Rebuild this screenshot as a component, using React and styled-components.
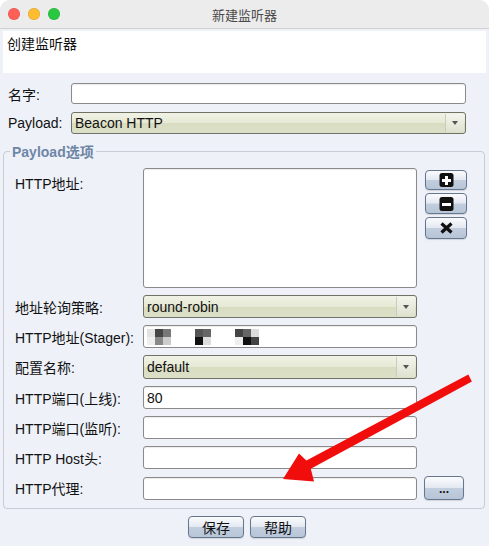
import React from 'react';
import styled, { createGlobalStyle } from 'styled-components';

const GlobalStyle = createGlobalStyle`
  html, body {
    margin: 0;
    padding: 0;
    background: #ffffff;
  }
  body {
    font-family: "Liberation Sans", "Noto Sans CJK SC", sans-serif;
    font-size: 13px;
    color: #111;
  }
`;

const Window = styled.div`
  position: relative;
  width: 489px;
  height: 546px;
  background: #eef1f8;
  border-radius: 10px 10px 0 0;
  overflow: hidden;
  display: flex;
  flex-direction: column;
`;

const TitleBar = styled.div`
  height: 28px;
  flex: none;
  background: #ececec;
  border-bottom: 1px solid #d0d0d0;
  display: flex;
  align-items: center;
  position: relative;
`;

const Lights = styled.div`
  display: flex;
  gap: 8px;
  padding-left: 8px;
`;

const Light = styled.span`
  width: 12px;
  height: 12px;
  border-radius: 50%;
  background: ${(p) => p.color};
  box-shadow: inset 0 0 0 0.5px rgba(0, 0, 0, 0.15);
`;

const Title = styled.div`
  position: absolute;
  left: 0;
  right: 0;
  text-align: center;
  font-size: 13px;
  color: #4a4a4a;
  pointer-events: none;
`;

const Banner = styled.div`
  margin: 2px 3px 0;
  height: 42px;
  background: #ffffff;
  padding: 4px 4px 0;
  box-sizing: border-box;
  font-size: 14px;
  line-height: 18px;
`;

const TopForm = styled.div`
  display: grid;
  grid-template-columns: 63px 395px;
  row-gap: 8px;
  padding: 10px 0 0 8px;
  align-items: center;
`;

const Label = styled.div`
  font-size: 14px;
  white-space: nowrap;
`;

const TextInput = styled.div`
  height: ${(p) => p.h || 22}px;
  box-sizing: border-box;
  background: #ffffff;
  border: 1px solid #8a8a8a;
  border-radius: 3px;
  padding: 0 3px;
  display: flex;
  align-items: ${(p) => (p.top ? 'flex-start' : 'center')};
  font-size: 14px;
  box-shadow: inset 0 1px 1px rgba(0, 0, 0, 0.08);
`;

const Combo = styled.div`
  height: ${(p) => p.h || 22}px;
  box-sizing: border-box;
  border: 1px solid #6f7264;
  border-radius: 3px;
  background: linear-gradient(#f1f2e6 0%, #e6e9d4 50%, #d8dcc0 51%, #dce0c8 100%);
  display: flex;
  align-items: center;
  padding-left: 3px;
  font-size: 14px;
  position: relative;
`;

const ComboArrow = styled.div`
  position: absolute;
  right: 1px;
  top: 1px;
  bottom: 1px;
  width: 18px;
  border-left: 1px solid #c9ccbb;
  border-radius: 0 2px 2px 0;
  background: linear-gradient(#f3f4ec, #dfe2d0);
  display: flex;
  align-items: center;
  justify-content: center;
  &::after {
    content: '';
    border-left: 3.5px solid transparent;
    border-right: 3.5px solid transparent;
    border-top: 4px solid #555;
  }
`;

const Fieldset = styled.fieldset`
  margin: 7px 4px 0 3px;
  padding: 7px 0 8px 11px;
  border: 1px solid #c8ccd6;
  border-radius: 4px;
  min-width: 0;
`;

const Legend = styled.legend`
  font-weight: bold;
  color: #6e86a6;
  font-size: 14px;
  padding: 0 2px;
  margin-left: -5px;
`;

const Grid = styled.div`
  display: grid;
  grid-template-columns: 128px 274px 50px;
  row-gap: 7px;
  align-items: center;
`;

const TopLabel = styled(Label)`
  align-self: start;
  padding-top: 5px;
`;

const SideButtons = styled.div`
  align-self: start;
  padding: 2px 0 0 8px;
  display: flex;
  flex-direction: column;
  gap: 3px;
`;

const GelButton = styled.button`
  width: ${(p) => p.w || 42}px;
  height: ${(p) => p.h || 21}px;
  box-sizing: border-box;
  padding: 0;
  border: 1px solid #66768d;
  border-radius: 4px;
  background: linear-gradient(#fafbfd 0%, #e4e9f1 48%, #c2cede 52%, #b7c5d8 100%);
  display: flex;
  align-items: center;
  justify-content: center;
  font-family: "Liberation Sans", "Noto Sans CJK SC", sans-serif;
  font-size: 14px;
  color: #111;
  box-shadow: 0 1px 1px rgba(0, 0, 0, 0.12);
`;

const Dots = styled.span`
  font-size: 12px;
  font-weight: bold;
  margin-top: 2px;
`;

const Spacer = styled.div``;

const Footer = styled.div`
  display: flex;
  justify-content: center;
  gap: 6px;
  padding: 7px 0 0 5px;
`;

const ArrowLayer = styled.svg`
  position: absolute;
  left: 0;
  top: 0;
  pointer-events: none;
`;

const Blur = styled.div`
  display: flex;
  flex-direction: column;
  filter: blur(0.6px);
`;

const PxRow = styled.div`
  display: flex;
`;

const Px = styled.span`
  display: inline-block;
  width: 8px;
  height: 8px;
  background: ${(p) => p.c};
`;

const Icon = ({ kind }) => (
  <svg width="15" height="14" viewBox="0 0 15 14">
    <rect x="0.5" y="0" width="14" height="14" rx="2.5" fill={kind === 'x' ? 'none' : '#111'} />
    {kind === 'plus' && (
      <path d="M6 3h3v3h3v3H9v3H6V9H3V6h3z" fill="#fff" />
    )}
    {kind === 'minus' && <rect x="3" y="6" width="9" height="3" fill="#fff" />}
    {kind === 'x' && (
      <path d="M2.5 2.5L12.5 11.5M12.5 2.5L2.5 11.5" stroke="#111" strokeWidth="3.2" />
    )}
  </svg>
);

const maskTop = ['#e2e2e2', '#444', '#777', '#fff', '#fff', '#fff', '#555', '#666', '#fff', '#fff', '#fff', '#444', '#666', '#ddd'];
const maskBottom = ['#eee', '#888', '#ccc', '#fff', '#fff', '#fff', '#111', '#ddd', '#fff', '#fff', '#fff', '#eee', '#111', '#444'];

const Masked = () => (
  <Blur>
    <PxRow>{maskTop.map((c, i) => <Px key={i} c={c} />)}</PxRow>
    <PxRow>{maskBottom.map((c, i) => <Px key={i} c={c} />)}</PxRow>
  </Blur>
);

const rows = [
  { label: '地址轮询策略:', combo: 'round-robin' },
  { label: 'HTTP地址(Stager):', masked: true },
  { label: '配置名称:', combo: 'default', h: 24 },
  { label: 'HTTP端口(上线):', value: '80' },
  { label: 'HTTP端口(监听):', value: '' },
  { label: 'HTTP Host头:', value: '' },
];

export default function App() {
  return (
    <>
      <GlobalStyle />
      <Window>
        <TitleBar>
          <Lights>
            <Light color="#fe5f57" />
            <Light color="#febc2e" />
            <Light color="#28c840" />
          </Lights>
          <Title>新建监听器</Title>
        </TitleBar>

        <Banner>创建监听器</Banner>

        <TopForm>
          <Label>名字:</Label>
          <TextInput h={21} />
          <Label>Payload:</Label>
          <Combo>
            Beacon HTTP
            <ComboArrow />
          </Combo>
        </TopForm>

        <Fieldset>
          <Legend>Payload选项</Legend>
          <Grid>
            <TopLabel>HTTP地址:</TopLabel>
            <TextInput h={120} top />
            <SideButtons>
              <GelButton h={20}><Icon kind="plus" /></GelButton>
              <GelButton h={21}><Icon kind="minus" /></GelButton>
              <GelButton h={22}><Icon kind="x" /></GelButton>
            </SideButtons>

            {rows.map((r) => (
              <React.Fragment key={r.label}>
                <Label>{r.label}</Label>
                {r.combo ? (
                  <Combo h={r.h || 23}>
                    {r.combo}
                    <ComboArrow />
                  </Combo>
                ) : (
                  <TextInput h={23}>{r.masked ? <Masked /> : r.value}</TextInput>
                )}
                <Spacer />
              </React.Fragment>
            ))}

            <Label>HTTP代理:</Label>
            <TextInput h={23} />
            <Spacer>
              <GelButton w={40} h={24} style={{ marginLeft: 7 }}>
                <Dots>...</Dots>
              </GelButton>
            </Spacer>
          </Grid>
        </Fieldset>

        <Footer>
          <GelButton w={56} h={22}>保存</GelButton>
          <GelButton w={56} h={22}>帮助</GelButton>
        </Footer>

        <ArrowLayer width="489" height="546" viewBox="0 0 489 546">
          <path
            d="M468.3 374.4 L471.9 381.4 L310.8 468.7 L314 481.5 L283 479 L299 453.5 L306.4 460.4 Z"
            fill="#f20d0d"
          />
        </ArrowLayer>
      </Window>
    </>
  );
}
